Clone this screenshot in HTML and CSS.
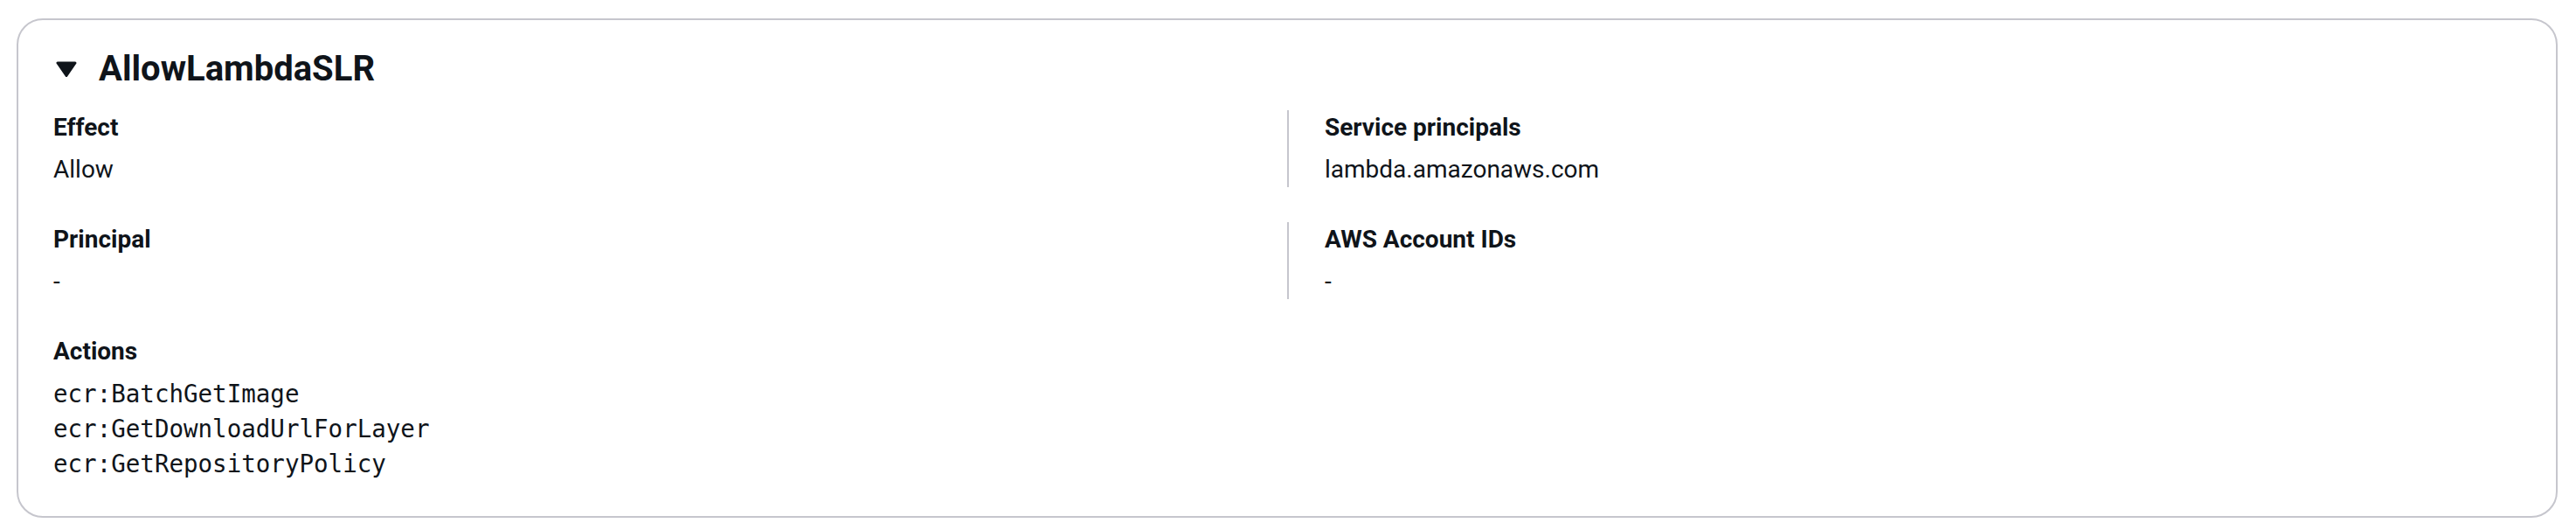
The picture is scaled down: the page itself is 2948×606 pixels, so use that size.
FILE: index.html
```html
<!DOCTYPE html>
<html lang="en">
<head>
  <meta charset="UTF-8">
  <title>Policy statement</title>
  <link rel="stylesheet" href="styles.css">
</head>
<body>
  <div class="page">
    <section class="statement">
      <h2 class="statement-title">
        <svg class="caret" viewBox="0 0 24 18" width="24" height="18" aria-hidden="true">
          <path d="M2 2h20L12 16.5z" />
        </svg>
        <span>AllowLambdaSLR</span>
      </h2>

      <div class="grid">
        <div class="item">
          <div class="label">Effect</div>
          <div class="value">Allow</div>
        </div>
        <div class="item item-right">
          <div class="label">Service principals</div>
          <div class="value">lambda.amazonaws.com</div>
        </div>
        <div class="item">
          <div class="label">Principal</div>
          <div class="value">-</div>
        </div>
        <div class="item item-right">
          <div class="label">AWS Account IDs</div>
          <div class="value">-</div>
        </div>
      </div>

      <div class="item">
        <div class="label">Actions</div>
        <div class="value mono">
          <div>ecr:BatchGetImage</div>
          <div>ecr:GetDownloadUrlForLayer</div>
          <div>ecr:GetRepositoryPolicy</div>
        </div>
      </div>
    </section>
  </div>
</body>
</html>
```

FILE: styles.css
```css
body {
  margin: 0;
  background-color: #fff;
  font-family: Roboto, "Open Sans", sans-serif;
  color: #0f141a;
}

.page {
  padding: 21px 21px 0 19px;
}

.statement {
  border: 2px solid #c6c6cd;
  border-radius: 30px;
  padding: 32px 40px 40px 40px;
}

.statement-title {
  display: flex;
  align-items: center;
  gap: 25px;
  margin: 0 0 23px 0;
  font-size: 40px;
  line-height: 48px;
  font-weight: 700;
}

.caret {
  margin-left: 3px;
  fill: #0f141a;
  stroke: #0f141a;
  stroke-width: 3;
  stroke-linejoin: round;
}

.grid {
  display: grid;
  grid-template-columns: 1fr 1fr;
  row-gap: 40px;
  margin-bottom: 40px;
}

.item-right {
  border-left: 2px solid #c6c6cd;
  padding-left: 41px;
}

.label {
  font-size: 28px;
  line-height: 40px;
  font-weight: 700;
  margin-bottom: 8px;
}

.value {
  font-size: 28px;
  line-height: 40px;
}

.mono {
  font-family: "DejaVu Sans Mono", monospace;
  font-size: 27.5px;
  line-height: 40px;
  margin-top: 2px;
}
```
